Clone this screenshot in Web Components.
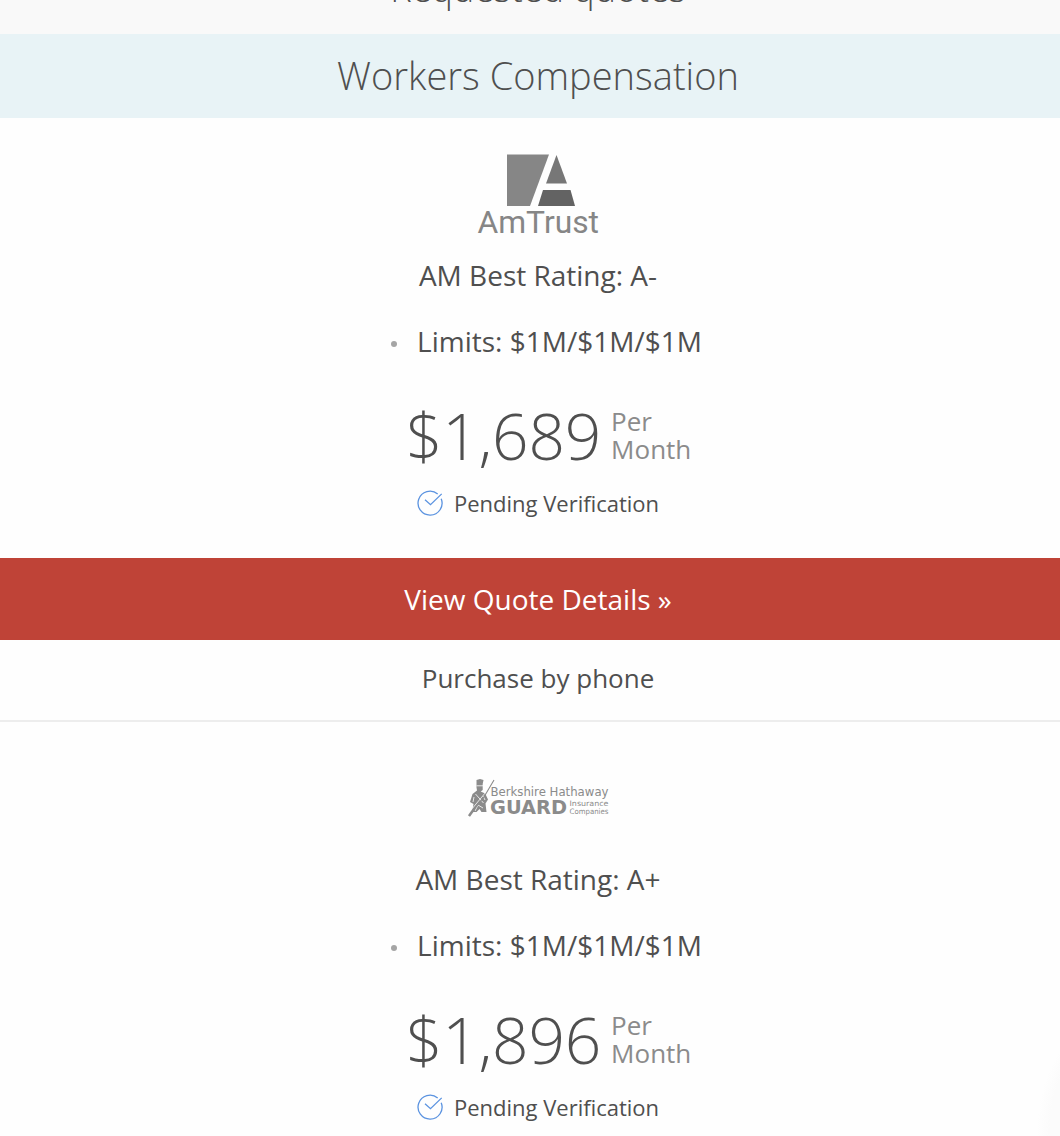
<!DOCTYPE html>
<html lang="en">
<head>
<meta charset="utf-8">
<title>Requested quotes</title>
<style>
    html {
        overflow: hidden;
    }
    body {
        margin: 0;
        height: 1136px;
        overflow: hidden;
        background: #fefefe;
        color: #4f4f4f;
        font-family: "Open Sans", sans-serif;
    }
</style>
</head>
<body>
<quote-page></quote-page>

<script>
class SectionTitle extends HTMLElement {
    constructor() {
        super();
        this.attachShadow({ mode: 'open' });
    }

    connectedCallback() {
        this.shadowRoot.innerHTML = `
            <style>
                :host {
                    display: flex;
                    align-items: center;
                    justify-content: center;
                    height: 84px;
                    background: #e8f3f6;
                }
                :host([plain]) {
                    height: 92px;
                    background: #f9f9f9;
                }
                h2 {
                    margin: 0;
                    padding-bottom: 2px;
                    font-size: 38px;
                    font-weight: 300;
                    line-height: 52px;
                }
                :host([plain]) h2 {
                    padding: 2px 0 0;
                    font-size: 36px;
                }
            </style>
            <h2><slot></slot></h2>
        `;
    }
}

class AmtrustLogo extends HTMLElement {
    constructor() {
        super();
        this.attachShadow({ mode: 'open' });
    }

    connectedCallback() {
        this.shadowRoot.innerHTML = `
            <style>
                :host {
                    display: block;
                }
                svg {
                    display: block;
                }
            </style>
            <svg width="124" height="84" viewBox="0 0 124 84">
                <path fill="#868686" d="M31 .5h42L54 52H31z"/>
                <path fill="#777" d="M80.500 1L91 29.500H70z"/>
                <path fill="#636363" d="M67 36h27.500L99 52H62z"/>
                <text x="1.500" y="79" fill="#868686" font-family="Roboto, sans-serif" font-size="32" textLength="121.500" lengthAdjust="spacingAndGlyphs">AmTrust</text>
            </svg>
        `;
    }
}

class GuardLogo extends HTMLElement {
    constructor() {
        super();
        this.attachShadow({ mode: 'open' });
    }

    connectedCallback() {
        this.shadowRoot.innerHTML = `
            <style>
                :host {
                    display: block;
                }
                svg {
                    display: block;
                    overflow: visible;
                }
                text {
                    font-family: "DejaVu Sans", sans-serif;
                    fill: #8b8b8b;
                }
            </style>
            <svg width="142" height="40" viewBox="0 0 142 40">
                <path fill="#8b8b8b" d="M9.500 1L13 0l3.500 1-.8 4v6l-2 1.500 4.500 2 2.800 6-2.500 4 1 8.500h-5l-2-3-3 3H5l1.500-8-3.500-2 2.500-8 4.500-3.500-.5-3z"/>
                <path stroke="#fefefe" stroke-width=".8" fill="none" d="M9.500 6.800h6.500M4 31L19 13M8.500 15l8 9M7 18l-1 5M8 32l3-6 5 3M16 17l2 4"/>
                <path stroke="#8b8b8b" stroke-width="1.100" fill="none" d="M2 37L17 18 27 1"/>
                <path stroke="#8b8b8b" stroke-width="2.500" fill="none" d="M2 37l5-7"/>
                <text x="23.500" y="17" font-size="13" textLength="118" lengthAdjust="spacingAndGlyphs">Berkshire Hathaway</text>
                <text x="23" y="34.500" font-size="19" font-weight="bold" textLength="77" lengthAdjust="spacingAndGlyphs">GUARD</text>
                <text x="102.500" y="26.500" font-size="7.500" textLength="39" lengthAdjust="spacingAndGlyphs">Insurance</text>
                <text x="102.500" y="35" font-size="7.500" textLength="39" lengthAdjust="spacingAndGlyphs">Companies</text>
            </svg>
        `;
    }
}

class VerifyIcon extends HTMLElement {
    constructor() {
        super();
        this.attachShadow({ mode: 'open' });
    }

    connectedCallback() {
        this.shadowRoot.innerHTML = `
            <style>
                :host {
                    display: block;
                }
                svg {
                    display: block;
                }
            </style>
            <svg width="26" height="26" viewBox="0 0 26 26" fill="none" stroke="#5b93e0" stroke-width="1.300">
                <path d="M20.700 3.900A12 12 0 1 0 24.200 8.700"/>
                <path d="M8 9.700l5.500 5L24.700 3.900"/>
            </svg>
        `;
    }
}

class QuoteCard extends HTMLElement {
    constructor() {
        super();
        this.attachShadow({ mode: 'open' });
    }

    connectedCallback() {
        this.shadowRoot.innerHTML = `
            <style>
                :host {
                    display: block;
                    text-align: center;
                }
                .summary {
                    display: flex;
                    flex-direction: column;
                    align-items: center;
                }
                .logo {
                    height: 124px;
                    display: flex;
                    align-items: center;
                    padding-top: 32px;
                    box-sizing: border-box;
                    margin-bottom: 13px;
                }
                ::slotted(guard-logo) {
                    margin-top: -2px;
                }
                .rating {
                    font-size: 28px;
                    line-height: 40px;
                }
                ul {
                    margin: 26px 0 0;
                    padding: 0;
                    list-style: none;
                }
                li {
                    display: flex;
                    align-items: center;
                    gap: 20px;
                    padding-left: 17px;
                    font-size: 28px;
                    line-height: 40px;
                }
                li::before {
                    content: "";
                    width: 6px;
                    height: 6px;
                    margin-top: 5px;
                    border-radius: 50%;
                    background: #a5a5a5;
                }
                .price {
                    display: flex;
                    align-items: center;
                    gap: 10px;
                    height: 84px;
                    margin: 32px 0 0 21px;
                }
                .amount {
                    padding-top: 2px;
                    font-size: 64px;
                    font-weight: 300;
                    line-height: 84px;
                    letter-spacing: -0.2px;
                }
                .period {
                    width: 80px;
                    text-align: left;
                    color: #8b8b8b;
                    font-size: 26px;
                    line-height: 28px;
                }
                .status {
                    display: flex;
                    align-items: center;
                    gap: 11px;
                    margin-top: 11px;
                    font-size: 22px;
                    line-height: 30px;
                }
                .actions {
                    display: none;
                    margin-top: 40px;
                    border-bottom: 2px solid #ededed;
                }
                :host([actions]) .actions {
                    display: block;
                }
                .details {
                    background: #bf4337;
                    color: #fff;
                    font-size: 28px;
                    line-height: 82px;
                }
                .phone {
                    font-size: 26px;
                    line-height: 76px;
                    height: 80px;
                }
            </style>
            <div class="summary">
                <div class="logo"><slot></slot></div>
                <div class="rating">AM Best Rating: ${this.getAttribute('rating')}</div>
                <ul><li><span>Limits: ${this.getAttribute('limits')}</span></li></ul>
                <div class="price">
                    <span class="amount">${this.getAttribute('price')}</span>
                    <span class="period">Per<br>Month</span>
                </div>
                <div class="status"><verify-icon></verify-icon><span>Pending Verification</span></div>
            </div>
            <div class="actions">
                <div class="details">View Quote Details »</div>
                <div class="phone">Purchase by phone</div>
            </div>
        `;
    }
}

class QuotePage extends HTMLElement {
    constructor() {
        super();
        this.attachShadow({ mode: 'open' });
    }

    connectedCallback() {
        this.shadowRoot.innerHTML = `
            <style>
                :host {
                    display: block;
                    width: 1076px;
                    margin-top: -58px;
                }
                /* faint halo in the bottom corner */
                .halo {
                    position: absolute;
                    left: 1038px;
                    top: 1050px;
                    width: 22px;
                    height: 86px;
                    background: radial-gradient(circle at 147px 80px, #fbfbfb 135px, #fefefe 148px);
                }
            </style>
            <section-title plain>Requested quotes</section-title>
            <section-title>Workers Compensation</section-title>
            <quote-card actions rating="A-" limits="$1M/$1M/$1M" price="$1,689">
                <amtrust-logo></amtrust-logo>
            </quote-card>
            <quote-card rating="A+" limits="$1M/$1M/$1M" price="$1,896">
                <guard-logo></guard-logo>
            </quote-card>
            <div class="halo"></div>
        `;
    }
}

customElements.define('section-title', SectionTitle);
customElements.define('amtrust-logo', AmtrustLogo);
customElements.define('guard-logo', GuardLogo);
customElements.define('verify-icon', VerifyIcon);
customElements.define('quote-card', QuoteCard);
customElements.define('quote-page', QuotePage);
</script>
</body>
</html>
